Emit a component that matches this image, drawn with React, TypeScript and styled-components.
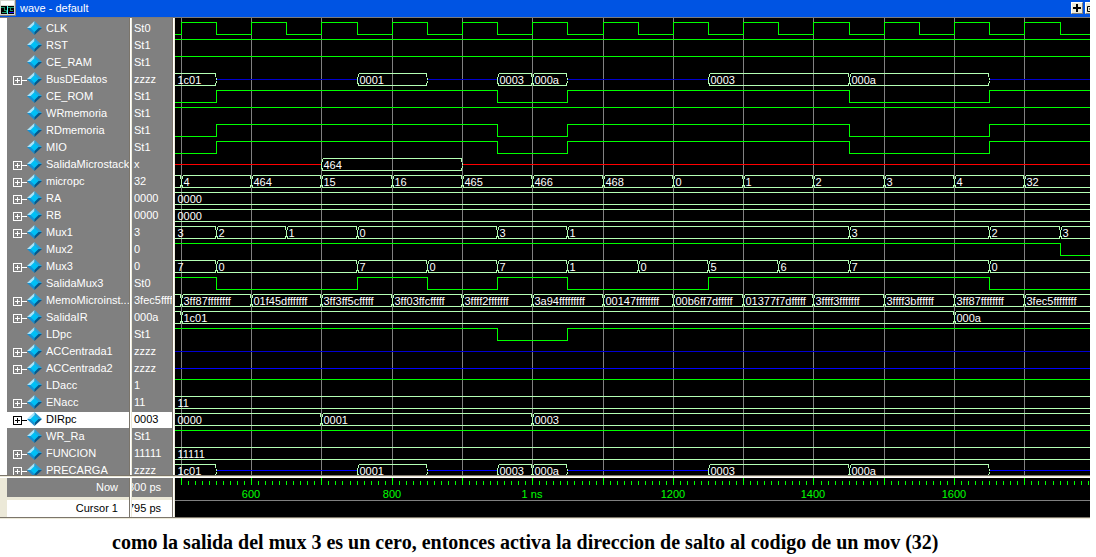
import React from "react";
import styled, { createGlobalStyle } from "styled-components";

const ui = `"Liberation Sans", Arial, sans-serif`;

const Global = createGlobalStyle`
  * { box-sizing: border-box; }
  body { margin: 0; background: #fff; }
`;

const Page = styled.main`
  font-family: ${ui};
  font-size: 11px;
  line-height: 17px;
  color: #fff;
`;

const Frame = styled.section`
  margin-right: 6px;
  overflow: hidden;
`;

const TitleBar = styled.header`
  display: flex;
  align-items: flex-start;
  gap: 4px;
  height: 18px;
  background: #0054e3;
  border-bottom: 1px solid #7b7b7b;
  overflow: hidden;
`;

const Title = styled.h1`
  flex: 1;
  margin: 0;
  font-size: 11px;
  font-weight: 400;
  line-height: 16px;
`;

const TitleButtons = styled.div`
  display: flex;
  gap: 2px;
  width: 19px;
  margin-top: 2px;
  overflow: hidden;
`;

const TitleButton = styled.button`
  flex: none;
  width: 12px;
  height: 12px;
  padding: 0;
  border: 1px solid;
  border-color: #fff #808080 #808080 #fff;
  background: #ece9d8;
  svg { display: block; }
`;

const Panes = styled.div<{ $h: number }>`
  display: grid;
  grid-template-columns: 7px 122px 3px 40px 3px 1fr;
  height: ${(p) => p.$h}px;
  overflow: hidden;
`;

const Gutter = styled.div<{ $bg: string }>`
  background: ${(p) => p.$bg};
`;

const Splitter = styled.div`
  background: #fff;
  border-left: 1px solid #7b756b;
  border-right: 1px solid #ece9d8;
`;

const Column = styled.div`
  min-width: 0;
  padding-top: 3px;
  background: #808080;
  overflow: hidden;
`;

const Row = styled.div<{ $selected?: boolean }>`
  display: flex;
  align-items: center;
  height: 16px;
  margin-bottom: 1px;
  padding-bottom: 2px;
  line-height: 14px;
  white-space: nowrap;
  color: ${(p) => (p.$selected ? "#000" : "#fff")};
  background: ${(p) => (p.$selected ? "#fff" : "transparent")};
  > svg { flex: none; }
`;

const Expander = styled.button`
  flex: none;
  width: 20px;
  height: 14px;
  padding: 0 0 0 6px;
  border: 0;
  background: none;
  color: inherit;
  svg { display: block; }
`;

const Indent = styled.span`
  flex: none;
  width: 20px;
`;

const Name = styled.span`
  padding-left: 4px;
`;

const Value = styled.span`
  padding-left: 2px;
`;

const WavePane = styled.div`
  min-width: 0;
  background: #000;
  overflow: hidden;
  svg { display: block; }
`;

const Divider = styled.div`
  height: 3px;
  border-top: 1px solid #7b756b;
  border-bottom: 1px solid #fff;
  background: #ece9d8;
`;

const TimeColumn = styled.div`
  display: flex;
  flex-direction: column;
  gap: 3px;
  min-width: 0;
  background: #ece9d8;
`;

const TimeCell = styled.div<{ $light?: boolean }>`
  display: flex;
  justify-content: flex-end;
  align-items: center;
  height: ${(p) => (p.$light ? 17 : 19)}px;
  padding-right: 11px;
  white-space: nowrap;
  overflow: hidden;
  color: ${(p) => (p.$light ? "#000" : "#fff")};
  background: ${(p) => (p.$light ? "#fff" : "#808080")};
`;

const Caption = styled.p`
  margin: 10px 0 0 112px;
  font: bold 20px/24px "Liberation Serif", "Times New Roman", serif;
  color: #000;
`;

type Step = [number, string];
type Signal = {
  name: string;
  value: string;
  bus?: boolean;
  bright?: boolean;
  selected?: boolean;
  steps: Step[];
};

const pulse: Step[] = [[0, "L"], [550, "H"], [950, "L"], [1050, "H"], [1450, "L"], [1650, "H"]];
const high: Step[] = [[0, "H"]];
const data: Step[] = [
  [0, "1c01"], [550, "Z"], [750, "0001"], [850, "Z"], [950, "0003"],
  [1000, "000a"], [1050, "Z"], [1250, "0003"], [1450, "000a"], [1650, "Z"],
];
const clock: Step[] = [[0, "L"]];
for (let t = 500; t < 1800; t += 100) clock.push([t, "H"], [t + 50, "L"]);
const every100 = (words: string[]): Step[] => [
  [0, ""],
  ...words.map((w, i): Step => [500 + i * 100, w]),
];

const signals: Signal[] = [
  { name: "CLK", value: "St0", steps: clock },
  { name: "RST", value: "St1", steps: high },
  { name: "CE_RAM", value: "St1", steps: high },
  { name: "BusDEdatos", value: "zzzz", bus: true, steps: data },
  { name: "CE_ROM", value: "St1", steps: pulse },
  { name: "WRmemoria", value: "St1", steps: high },
  { name: "RDmemoria", value: "St1", steps: pulse },
  { name: "MIO", value: "St1", steps: pulse },
  { name: "SalidaMicrostack", value: "x", bus: true, steps: [[0, "X"], [700, "464"], [900, "X"]] },
  {
    name: "micropc", value: "32", bus: true,
    steps: every100(["4", "464", "15", "16", "465", "466", "468", "0", "1", "2", "3", "4", "32"]),
  },
  { name: "RA", value: "0000", bus: true, steps: [[0, "0000"]] },
  { name: "RB", value: "0000", bus: true, steps: [[0, "0000"]] },
  {
    name: "Mux1", value: "3", bus: true,
    steps: [[0, "3"], [550, "2"], [650, "1"], [750, "0"], [950, "3"], [1050, "1"], [1450, "3"], [1650, "2"], [1750, "3"]],
  },
  { name: "Mux2", value: "0", steps: [[0, "H"], [1750, "L"]] },
  {
    name: "Mux3", value: "0", bus: true,
    steps: [[0, "7"], [550, "0"], [750, "7"], [850, "0"], [950, "7"], [1050, "1"], [1150, "0"], [1250, "5"], [1350, "6"], [1450, "7"], [1650, "0"]],
  },
  {
    name: "SalidaMux3", value: "St0",
    steps: [[0, "H"], [550, "L"], [750, "H"], [850, "L"], [950, "H"], [1050, "L"], [1250, "H"], [1650, "L"]],
  },
  {
    name: "MemoMicroinst...", value: "3fec5ffffffff", bus: true,
    steps: every100([
      "3ff87ffffffff", "01f45dfffffff", "3ff3ff5cfffff", "3ff03ffcfffff", "3ffff2fffffff",
      "3a94fffffffff", "00147ffffffff", "00b6ff7dfffff", "01377f7dfffff", "3ffff3fffffff",
      "3ffff3bffffff", "3ff87ffffffff", "3fec5ffffffff",
    ]),
  },
  { name: "SalidaIR", value: "000a", bus: true, steps: [[0, ""], [500, "1c01"], [1600, "000a"]] },
  { name: "LDpc", value: "St1", steps: [[0, "H"], [950, "L"], [1050, "H"]] },
  { name: "ACCentrada1", value: "zzzz", bus: true, steps: [[0, "Z"]] },
  { name: "ACCentrada2", value: "zzzz", bus: true, bright: true, steps: [[0, "Z"]] },
  { name: "LDacc", value: "1", steps: high },
  { name: "ENacc", value: "11", bus: true, steps: [[0, "11"]] },
  { name: "DIRpc", value: "0003", bus: true, selected: true, steps: [[0, "0000"], [700, "0001"], [1000, "0003"]] },
  { name: "WR_Ra", value: "St1", steps: high },
  { name: "FUNCION", value: "11111", bus: true, steps: [[0, "11111"]] },
  { name: "PRECARGA", value: "zzzz", bus: true, bright: true, steps: data },
];

const END = 4000;
const PITCH = 17;
/* Simulation time in ps to a pixel column of the wave pane. */
const toX = (t: number) => Math.round(5.8 + (t - 500) * 0.703);
const startOf = (t: number) => (t === 0 ? -4 : toX(t));

function DigitalTrace({ steps, y }: { steps: Step[]; y: number }) {
  const level = (s: string) => y + (s === "H" ? 4 : 16);
  let d = `M-4 ${level(steps[0][1])}`;
  steps.slice(1).forEach(([t, s]) => {
    d += `H${toX(t)}V${level(s)}`;
  });
  return <path d={d + `H${END}`} stroke="#00ff00" />;
}

function BusTrace({ steps, y, bright }: { steps: Step[]; y: number; bright?: boolean }) {
  return (
    <>
      {steps.map(([t, s], i) => {
        const a = startOf(t);
        const b = i + 1 < steps.length ? toX(steps[i + 1][0]) : END;
        if (s === "Z" || s === "X") {
          const color = s === "X" ? "#ff0000" : bright ? "#0000ff" : "#0000d0";
          return <path key={t} d={`M${a} ${y + 10}H${b}`} stroke={color} />;
        }
        const top = y + 4;
        const left = t === 0 ? "" : `M${a + 1} ${top}v3M${a} ${top + 3}v7M${a + 1} ${top + 9}v3`;
        return (
          <g key={t}>
            <path
              stroke="#b4ffb4"
              d={`M${a + 1} ${top}H${b - 1}M${a + 1} ${top + 12}H${b - 1}${left}M${b - 1} ${top}v3M${b} ${top + 4}v2M${b} ${top + 7}v2M${b - 1} ${top + 9}v3`}
            />
            {s && <text fill="#fff" x={t === 0 ? 2 : a + 2} y={y + 14}>{s}</text>}
          </g>
        );
      })}
    </>
  );
}

const majors = Array.from({ length: 40 }, (_, i) => 500 + i * 100);
const minors = Array.from({ length: 400 }, (_, i) => 500 + i * 10);
const labels: Step[] = [[600, "600"], [800, "800"], [1000, "1 ns"], [1200, "1200"], [1400, "1400"], [1600, "1600"]];

function Waves() {
  return (
    <svg width="100%" height="457" fill="none" shapeRendering="crispEdges" role="img" aria-label="Waveforms">
      <g transform="translate(.5 .5)" fontFamily={ui} fontSize="11">
        <path stroke="#808080" d={majors.map((t) => `M${toX(t)} -1V460`).join("")} />
        {signals.map((s, i) =>
          s.bus ? (
            <BusTrace key={s.name} steps={s.steps} y={i * PITCH} bright={s.bright} />
          ) : (
            <DigitalTrace key={s.name} steps={s.steps} y={i * PITCH} />
          ),
        )}
      </g>
    </svg>
  );
}

function Ruler() {
  return (
    <svg width="100%" height="39" fill="none" shapeRendering="crispEdges" role="img" aria-label="Time ruler">
      <g transform="translate(.5 0)" stroke="#00ff00">
        <path d={minors.map((t) => `M${toX(t)} 3v4`).join("")} />
        <path d={majors.map((t) => `M${toX(t)} 0v7`).join("")} />
      </g>
      <path d={`M0 22.5H${END}`} stroke="#808080" />
      <g fill="#00ff00" fontFamily={ui} fontSize="11" textAnchor="middle">
        {labels.map(([t, text]) => (
          <text key={t} x={toX(t)} y="20">{text}</text>
        ))}
      </g>
    </svg>
  );
}

const Diamond = () => (
  <svg width="15" height="14" viewBox="0 0 15 14" aria-hidden="true">
    <path d="M7.500 0L0 7H7.500Z" fill="#a6e4fb" />
    <path d="M7.500 0L15 7H7.500Z" fill="#2a9fd6" />
    <path d="M0 7L7.500 14V7Z" fill="#1590d2" />
    <path d="M15 7L7.500 14V7Z" fill="#04588c" />
    <path d="M7.500 3L11.500 7L7.500 11L3.500 7Z" fill="#00bff5" />
  </svg>
);

const PlusBox = () => (
  <svg width="14" height="14" fill="none" stroke="currentColor" shapeRendering="crispEdges" aria-hidden="true">
    <path d="M.5 4.500h8v8h-8zM2 8.500h5M4.500 6v5M9 8.500h5" />
  </svg>
);

const AppIcon = () => (
  <svg width="16" height="16" shapeRendering="crispEdges" aria-hidden="true">
    <path d="M0 0h16v16H0z" fill="#808080" />
    <path d="M0 0h15v15H0z" fill="#d8d8d0" />
    <path d="M1 1h13v4H1z" fill="#fff" />
    <path d="M1 6h13v8H1z" fill="#000" />
    <path d="M1 7.500h3.500v3h3v-3h3v3M10 7.500h4M2 12.500h4v-2M10 10.500h3" fill="none" stroke="#1f9a6b" />
    <path d="M7.500 6v8" stroke="#5ff" />
    <path d="M9 12.500h5" stroke="#2020ff" />
  </svg>
);

export default function App() {
  return (
    <Page>
      <Global />
      <Frame>
        <TitleBar>
          <AppIcon />
          <Title>wave - default</Title>
          <TitleButtons>
            <TitleButton aria-label="Zoom pane">
              <svg width="10" height="10"><path d="M1 5h8M5 1v8" stroke="#000" strokeWidth="2" /></svg>
            </TitleButton>
            <TitleButton aria-label="Undock">
              <svg width="10" height="10" fill="none" stroke="#000"><path d="M1.500 3.500h6v5h-6zM3 6h3" /></svg>
            </TitleButton>
          </TitleButtons>
        </TitleBar>
        <Panes $h={457}>
          <Gutter $bg="#fff" />
          <Column>
            {signals.map((s) => (
              <Row key={s.name} $selected={s.selected}>
                {s.bus ? <Expander aria-label={`Expand ${s.name}`}><PlusBox /></Expander> : <Indent />}
                <Diamond />
                <Name>{s.name}</Name>
              </Row>
            ))}
          </Column>
          <Splitter />
          <Column>
            {signals.map((s) => (
              <Row key={s.name} $selected={s.selected}>
                <Value>{s.value}</Value>
              </Row>
            ))}
          </Column>
          <Splitter />
          <WavePane><Waves /></WavePane>
        </Panes>
        <Divider />
        <Panes $h={39}>
          <Gutter $bg="#ece9d8" />
          <TimeColumn>
            <TimeCell>Now</TimeCell>
            <TimeCell $light>Cursor 1</TimeCell>
          </TimeColumn>
          <Splitter />
          <TimeColumn>
            <TimeCell>800 ps</TimeCell>
            <TimeCell $light>795 ps</TimeCell>
          </TimeColumn>
          <Splitter />
          <WavePane><Ruler /></WavePane>
        </Panes>
        <Divider />
      </Frame>
      <Caption>como la salida del mux 3 es un cero, entonces activa la direccion de salto al codigo de un mov (32)</Caption>
    </Page>
  );
}
